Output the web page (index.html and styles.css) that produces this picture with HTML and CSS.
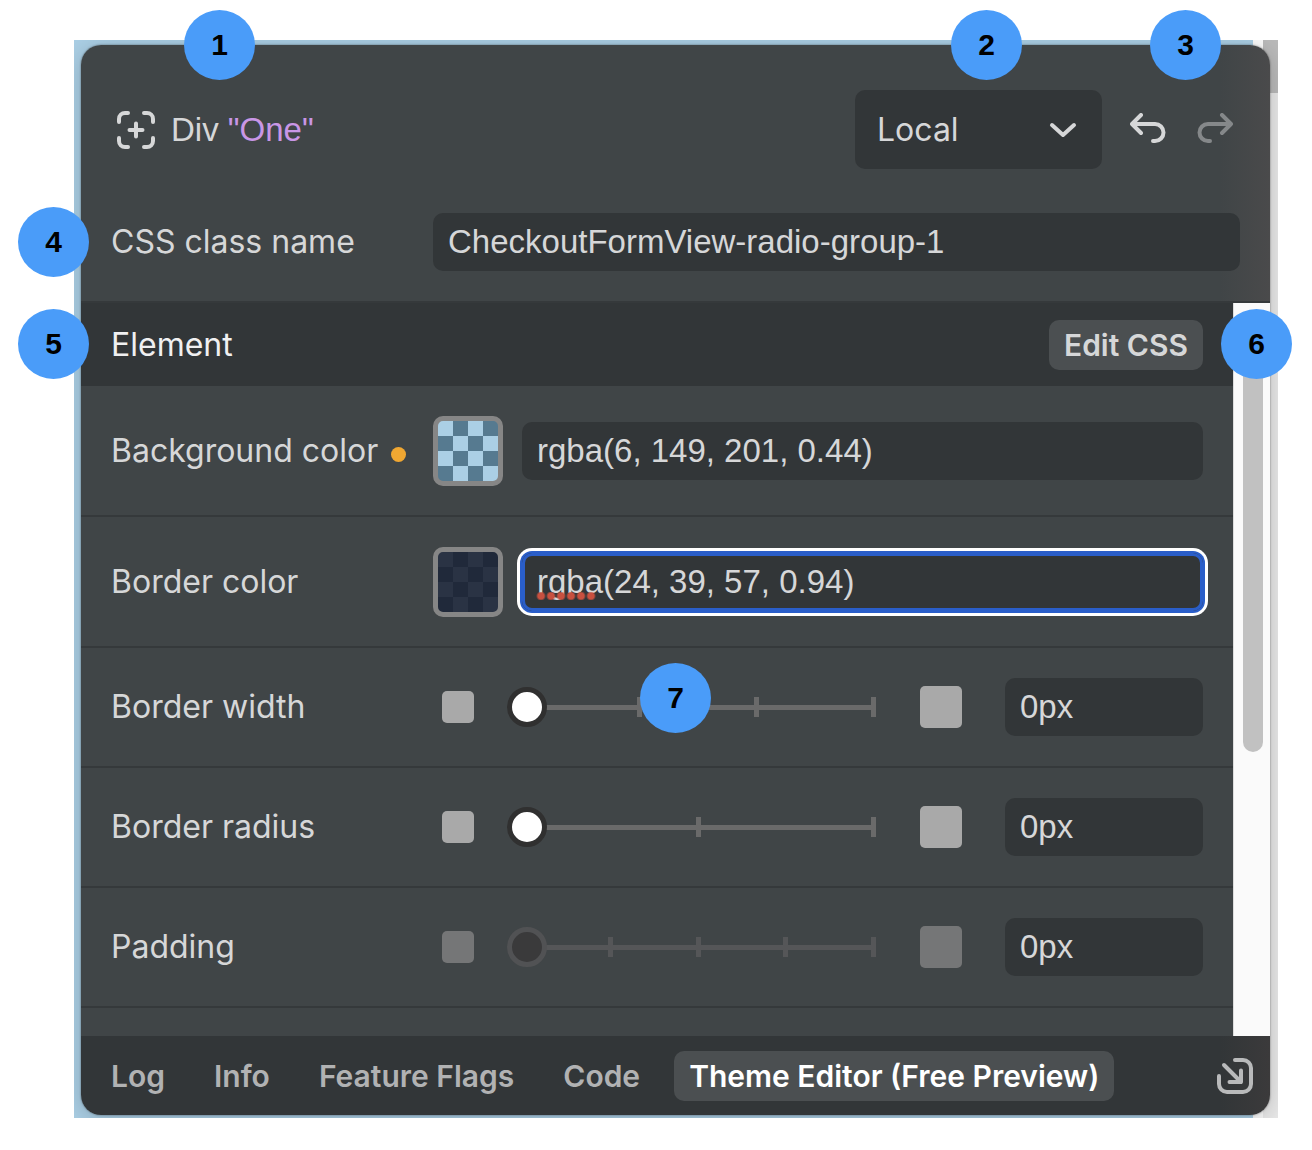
FILE: index.html
```html
<!DOCTYPE html>
<html lang="en">
<head>
<meta charset="utf-8">
<title>Theme Editor</title>
<link rel="stylesheet" href="styles.css">
</head>
<body>
<main class="figure">
  <div class="backdrop">
    <section class="panel">
      <header class="panel-header">
        <div class="title-row">
          <svg class="icon-target" viewBox="0 0 38 38" aria-hidden="true"><path d="M2 11V8a6 6 0 0 1 6-6h3M27 2h3a6 6 0 0 1 6 6v3M36 27v3a6 6 0 0 1-6 6h-3M11 36H8a6 6 0 0 1-6-6v-3M19 12.500v13M12.500 19h13"/></svg>
          <h1 class="title">Div <span class="title-name">"One"</span></h1>
          <div class="select-wrap">
            <select class="select" aria-label="Scope"><option>Local</option></select>
            <svg class="icon-chevron" viewBox="0 0 28 16" aria-hidden="true"><path d="M3 3l11 10L25 3"/></svg>
          </div>
          <button class="icon-button history-button" type="button" aria-label="Undo">
            <svg class="icon-history" viewBox="0 0 36 30" aria-hidden="true"><path d="M11 2L2 11l9 9M2 11h23a8.500 8.500 0 0 1 0 17h-2"/></svg>
          </button>
          <button class="icon-button history-button icon-button-off" type="button" aria-label="Redo" disabled>
            <svg class="icon-history" viewBox="0 0 36 30" aria-hidden="true"><path d="M25 2l9 9-9 9M34 11H11a8.500 8.500 0 0 0 0 17h2"/></svg>
          </button>
        </div>
        <div class="field">
          <label class="label" for="class-name">CSS class name</label>
          <input class="input" id="class-name" type="text" value="CheckoutFormView-radio-group-1">
        </div>
      </header>
      <div class="panel-body">
        <div class="settings">
          <div class="section-bar">
            <h2 class="section-title">Element</h2>
            <button class="pill pill-light" type="button">Edit CSS</button>
          </div>
          <div class="row row-tall">
            <label class="label" for="bg-color">Background color<span class="dot"></span></label>
            <button class="swatch swatch-sky" type="button" aria-label="Pick background color"></button>
            <div class="input-wrap"><input class="input" id="bg-color" type="text" value="rgba(6, 149, 201, 0.44)"></div>
          </div>
          <div class="row row-tall">
            <label class="label" for="border-color">Border color</label>
            <button class="swatch swatch-navy" type="button" aria-label="Pick border color"></button>
            <div class="input-wrap"><input class="input input-focus" id="border-color" type="text" spellcheck="false" value="rgba(24, 39, 57, 0.94)"><span class="misspelling"></span></div>
          </div>
          <div class="row">
            <label class="label" for="border-width">Border width</label>
            <span class="mark mark-small"></span>
            <div class="slider">
              <div class="ticks"><i></i><i></i><i></i><i></i></div>
              <input class="range" id="border-width" type="range" min="0" max="3" value="0">
            </div>
            <span class="mark mark-large"></span>
            <input class="input input-short" type="text" value="0px" aria-label="Border width value">
          </div>
          <div class="row">
            <label class="label" for="border-radius">Border radius</label>
            <span class="mark mark-small"></span>
            <div class="slider">
              <div class="ticks"><i></i><i></i><i></i></div>
              <input class="range" id="border-radius" type="range" min="0" max="2" value="0">
            </div>
            <span class="mark mark-large"></span>
            <input class="input input-short" type="text" value="0px" aria-label="Border radius value">
          </div>
          <div class="row row-off">
            <label class="label" for="padding">Padding</label>
            <span class="mark mark-small"></span>
            <div class="slider">
              <div class="ticks"><i></i><i></i><i></i><i></i><i></i></div>
              <input class="range" id="padding" type="range" min="0" max="4" value="0" disabled>
            </div>
            <span class="mark mark-large"></span>
            <input class="input input-short" type="text" value="0px" aria-label="Padding value">
          </div>
          <div class="row-peek"></div>
        </div>
        <div class="scrollbar"><div class="scroll-thumb"></div></div>
      </div>
      <footer class="tabs">
        <button class="pill" type="button">Log</button>
        <button class="pill" type="button">Info</button>
        <button class="pill" type="button">Feature Flags</button>
        <button class="pill" type="button">Code</button>
        <button class="pill pill-active" type="button">Theme Editor (Free Preview)</button>
        <button class="icon-button dock-button" type="button" aria-label="Dock panel">
          <svg class="icon-dock" viewBox="0 0 36 36" aria-hidden="true"><path d="M18 2h8a8 8 0 0 1 8 8v16a8 8 0 0 1-8 8H10a8 8 0 0 1-8-8v-8M7 7l17 17M12.500 24H24V12.500"/></svg>
        </button>
      </footer>
    </section>
  </div>
  <span class="badge badge-1">1</span>
  <span class="badge badge-2">2</span>
  <span class="badge badge-3">3</span>
  <span class="badge badge-4">4</span>
  <span class="badge badge-5">5</span>
  <span class="badge badge-6">6</span>
  <span class="badge badge-7">7</span>
</main>
</body>
</html>
```

FILE: styles.css
```css
* { box-sizing: border-box; }

body {
  margin: 0;
  background: #fff;
  color: #d6d7d8;
  font-family: Inter, "Liberation Sans", sans-serif;
  font-size: 32px;
  line-height: 40px;
}

h1, h2 { margin: 0; font: inherit; }

button, input, select {
  margin: 0;
  border: 0;
  color: inherit;
  font: inherit;
}

svg {
  display: block;
  fill: none;
  stroke: currentColor;
  stroke-width: 4px;
  stroke-linecap: round;
  stroke-linejoin: round;
}

.figure {
  position: relative;
  padding: 40px 34px 32px 74px;
}

.backdrop {
  overflow: hidden;
  padding: 5px 8px 3px 7px;
  background:
    linear-gradient(#bababa, #bababa) right top / 15px 53px no-repeat,
    linear-gradient(to left, #e9e9e9 15px, #fafafa 15px, #fafafa 25px, #abcfe5 25px);
}

.panel {
  border-radius: 20px;
  box-shadow: 0 0 2px rgba(0, 0, 0, 0.5), 0 4px 24px rgba(0, 0, 0, 0.2);
}

.panel-header {
  display: flex;
  flex-direction: column;
  gap: 44px;
  padding: 45px 30px 30px;
  border-bottom: 2px solid #35393b;
  border-radius: 20px 20px 0 0;
  background: linear-gradient(to left, #4a4a4b, #404547 50px);
}

.title-row {
  display: flex;
  align-items: center;
  padding: 0 7px 0 6px;
}

.icon-target { width: 38px; height: 38px; }

.title {
  flex: 1;
  padding-left: 16px;
  font-family: "Liberation Sans", Arial, sans-serif;
  font-size: 33px;
}

.title-name { color: #c996e6; }

.select-wrap { position: relative; margin-right: 28px; }

.select {
  display: block;
  width: 247px;
  height: 79px;
  padding: 0 22px;
  border-radius: 10px;
  background: #323638;
  appearance: none;
}

.icon-chevron {
  position: absolute;
  top: 32px;
  right: 25px;
  width: 28px;
  height: 16px;
  pointer-events: none;
}

.icon-button {
  padding: 0;
  background: none;
}

.history-button { margin-bottom: 4px; }

.icon-button-off { margin-left: 31px; color: #85888a; }

.icon-history { width: 36px; height: 30px; }

.field { display: flex; align-items: center; }

.label {
  flex: 0 0 322px;
  white-space: nowrap;
}

.dot {
  display: inline-block;
  width: 15px;
  height: 15px;
  margin-left: 13px;
  border-radius: 50%;
  background: #f0a732;
}

.input {
  display: block;
  width: 100%;
  min-width: 0;
  height: 58px;
  padding: 0 15px;
  border-radius: 10px;
  background: #323638;
  font-family: "Liberation Sans", Arial, sans-serif;
  font-size: 33px;
}

.input-wrap { position: relative; flex: 1; }

.input-focus {
  outline: 0;
  box-shadow: inset 0 0 0 3px #2a5ec9, 0 0 0 2px #2a5ec9, 0 0 0 5px #fff;
}

.misspelling {
  position: absolute;
  left: 14px;
  bottom: 11px;
  width: 60px;
  height: 8px;
  background: radial-gradient(circle, #c8503f 3px, transparent 5px) 0 0 / 10px 8px;
}

.input-short { flex: 0 0 198px; }

.panel-body { display: flex; }

.settings {
  flex: 1;
  min-width: 0;
  background: #404547;
}

.section-bar {
  display: flex;
  align-items: center;
  justify-content: space-between;
  height: 83px;
  padding: 0 30px;
  background: #323638;
}

.section-title { color: #f0f0f1; }

.row {
  display: flex;
  align-items: center;
  height: 120px;
  padding: 0 30px;
  border-bottom: 2px solid #35393b;
}

.row-tall { height: 131px; }

.row-peek { height: 28px; }

.swatch {
  flex: none;
  width: 70px;
  height: 70px;
  margin-right: 19px;
  border: 5px solid #868686;
  border-radius: 10px;
}

.swatch-sky { background: repeating-conic-gradient(#567a90 0 25%, #abcfe5 0 50%) 0 0 / 30px 30px; }

.swatch-navy { background: repeating-conic-gradient(#20293a 0 25%, #2a3344 0 50%) 0 0 / 30px 30px; }

.mark {
  flex: none;
  border-radius: 5px;
  background: #a9a9a9;
}

.mark-small { width: 32px; height: 32px; margin: 0 33px 0 9px; }

.mark-large { width: 42px; height: 42px; margin: 0 43px 0 44px; }

.row-off .mark { background: #757677; }

.slider {
  display: grid;
  flex: 1;
  align-items: center;
}

.ticks {
  display: flex;
  grid-area: 1 / 1;
  justify-content: space-between;
  margin-left: 13px;
  background: linear-gradient(#6a6a6a, #6a6a6a) center / 100% 5px no-repeat;
}

.ticks i { width: 5px; height: 20px; background: #6a6a6a; }

.row-off .ticks { background-image: linear-gradient(#555658, #555658); }

.row-off .ticks i { background: #555658; }

.range {
  grid-area: 1 / 1;
  width: 100%;
  height: 40px;
  background: none;
  appearance: none;
}

.range::-webkit-slider-thumb {
  width: 40px;
  height: 40px;
  border: 5px solid #303030;
  border-radius: 50%;
  background: #fff;
  appearance: none;
}

.range:disabled::-webkit-slider-thumb { border-color: #515254; background: #3a3a3b; }

.scrollbar {
  width: 37px;
  padding: 8px 8px 0 9px;
  border-left: 1px solid #ddd;
  background: #fafafa;
}

.scroll-thumb {
  width: 20px;
  height: 441px;
  border-radius: 10px;
  background: #c1c1c1;
}

.tabs {
  display: flex;
  align-items: center;
  gap: 19px;
  height: 79px;
  padding: 0 17px 0 15px;
  border-radius: 0 0 20px 20px;
  background: linear-gradient(to left, #3b3a3b, #323638 50px);
}

.pill {
  height: 50px;
  padding: 0 15px;
  border-radius: 10px;
  background: none;
  color: #b1b2b3;
  font-size: 30px;
  font-weight: 600;
  white-space: nowrap;
}

.pill-light { background: #4b4f51; color: #d6d7d8; }

.pill-active { background: #4b4f51; color: #fff; }

.dock-button { margin-left: auto; color: #b9babb; }

.icon-dock { width: 36px; height: 36px; }

.badge {
  position: absolute;
  width: 71px;
  height: 70px;
  border-radius: 50%;
  background: #4a9cf9;
  color: #000;
  font-family: "Liberation Sans", Arial, sans-serif;
  font-size: 30px;
  font-weight: 700;
  line-height: 70px;
  text-align: center;
}

.badge-1, .badge-2, .badge-3 { top: 10px; }
.badge-1 { left: 184px; }
.badge-2 { right: 290px; }
.badge-3 { right: 91px; }
.badge-4 { top: 207px; left: 18px; }
.badge-5 { top: 309px; left: 18px; }
.badge-6 { top: 309px; right: 20px; }
.badge-7 { top: 663px; left: 640px; }
```
